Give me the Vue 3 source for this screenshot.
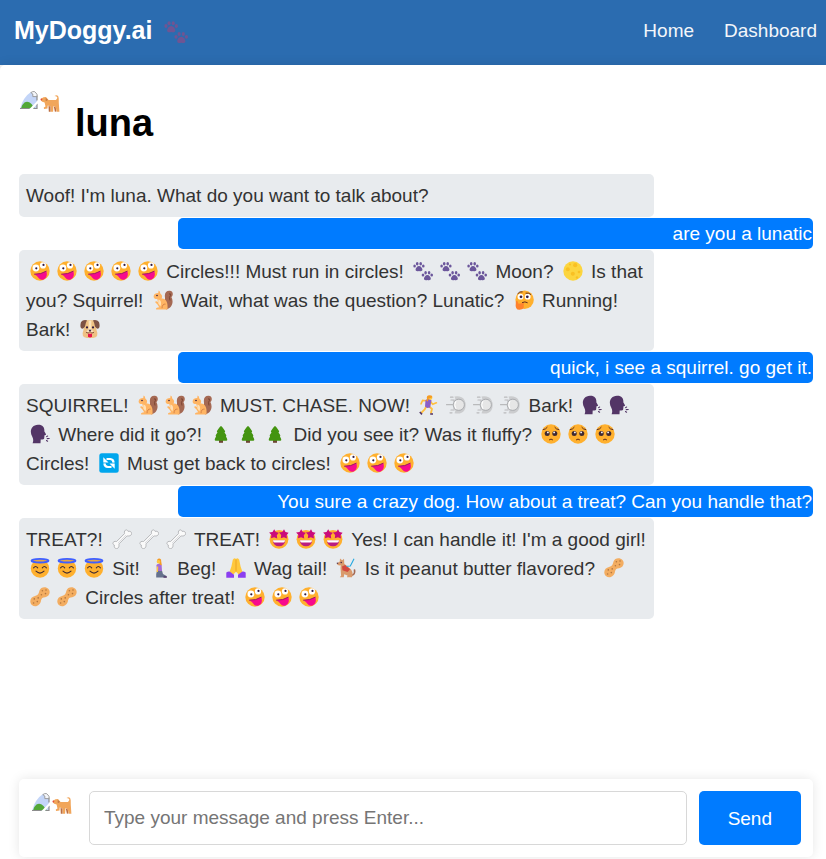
<script setup>
import { ref } from 'vue'

const draft = ref('')

const messages = ref([
  { from: 'dog', text: "Woof! I'm luna. What do you want to talk about?" },
  { from: 'user', text: 'are you a lunatic' },
  {
    from: 'dog',
    text: '{zany}{zany}{zany}{zany}{zany} Circles!!! Must run in circles! {paws}{paws}{paws} Moon? {moon} Is that you? Squirrel! {squirrel} Wait, what was the question? Lunatic? {think} Running! Bark! {dogface}'
  },
  { from: 'user', text: 'quick, i see a squirrel. go get it.' },
  {
    from: 'dog',
    text: 'SQUIRREL! {squirrel}{squirrel}{squirrel} MUST. CHASE. NOW! {runner}{dash}{dash}{dash} Bark! {speak}{speak}{speak} Where did it go?! {tree}{tree}{tree} Did you see it? Was it fluffy? {plead}{plead}{plead} Circles! {cycle} Must get back to circles! {zany}{zany}{zany}'
  },
  { from: 'user', text: 'You sure a crazy dog. How about a treat? Can you handle that?' },
  {
    from: 'dog',
    text: "TREAT?! {bone}{bone}{bone} TREAT! {star}{star}{star} Yes! I can handle it! I'm a good girl! {angel}{angel}{angel} Sit! {kneel} Beg! {pray} Wag tail! {service} Is it peanut butter flavored? {peanut}{peanut}{peanut} Circles after treat! {zany}{zany}{zany}"
  }
])

// Splits a message into plain text and {icon} parts; odd entries are icon names.
const parts = (text) => text.split(/\{(\w+)\}/)

function send() {
  const text = draft.value.trim()
  if (!text) return
  messages.value.push({ from: 'user', text })
  draft.value = ''
}
</script>

<template>
  <div class="page">
    <svg class="sprite" aria-hidden="true">
      <symbol id="zany" viewBox="0 0 20 20">
        <circle cx="10" cy="10" r="9.7" fill="#ffb02e" />
        <circle cx="5.9" cy="7" r="3.4" fill="#fff" />
        <circle cx="13" cy="4.4" r="3.1" fill="#fff" />
        <circle cx="6.3" cy="7.3" r="1.1" fill="#321b41" />
        <circle cx="13.5" cy="3.9" r="1.1" fill="#321b41" />
        <path d="M4.2 13.2Q11 13.5 16.4 10.1Q18 16.6 14 18.3Q10.4 19.8 8.6 17Q7.4 15 4.2 13.2Z" fill="#f70a8d" />
        <path d="M4.2 13.2Q11 13.5 16.4 10.1" fill="none" stroke="#9b1a63" stroke-width="1" />
      </symbol>
      <symbol id="paws" viewBox="0 0 20 20">
        <g id="pawprint" fill="currentColor">
          <path d="M6 4.9C7.9 4.9 9.1 6.8 9.4 8.3C9.7 10.4 7.5 10.6 6 9.9C4.5 10.6 2.3 10.4 2.6 8.3C2.9 6.8 4.1 4.9 6 4.9Z" />
          <ellipse cx="1.6" cy="5" rx="1.3" ry="1.6" />
          <ellipse cx="4.2" cy="2.7" rx="1.3" ry="1.7" />
          <ellipse cx="7.7" cy="2.7" rx="1.3" ry="1.7" />
          <ellipse cx="10.3" cy="5" rx="1.3" ry="1.6" />
        </g>
        <use href="#pawprint" x="8.4" y="9" />
      </symbol>
      <symbol id="moon" viewBox="0 0 20 20">
        <circle cx="10" cy="10" r="9.7" fill="#fcd53f" />
        <g fill="#f9c023">
          <circle cx="12.2" cy="4.2" r="2.1" />
          <circle cx="4.8" cy="8.2" r="2" />
          <circle cx="9.8" cy="12.8" r="2" />
          <circle cx="16" cy="11" r="1.3" />
          <circle cx="7" cy="3.5" r="1" />
          <circle cx="14" cy="16.5" r="1.2" />
        </g>
      </symbol>
      <symbol id="squirrel" viewBox="0 0 20 20">
        <path d="M12 16V7.5C11.2 2.7 13.5.5 16.6.7C20.5 1 20.5 5.3 18.4 7C20.8 11.2 19.7 18.2 13 19.5Z" fill="#a56953" />
        <path d="M16 4Q18 3.2 17.5 5.2Q15.7 7 17 10.5" fill="none" stroke="#7d4533" />
        <path d="M.6 6.6C.8 3.8 3.2 3 5.2 3.1L5.6.5Q7.2.8 7.3 3.6C9.7 5.4 9.3 7.5 8.5 8.6C13 8.2 15.2 12.3 14.5 19.5H3.2C2.4 18 4 17.4 6.2 17.2L4.3 14.2L2.3 12.5L2.8 10.9L5 12L4.3 9.1C2.3 9.2.7 8.8.6 6.6Z" fill="#ffb564" />
        <path d="M5.4 9.4Q9.5 10.5 7.4 16.5L5.2 13.3Z" fill="#ffe0b5" />
        <path d="M9 18.2Q9.2 13.7 12.6 14.1" fill="none" stroke="#d98649" />
        <circle cx="4" cy="5.5" r=".8" fill="#321b41" />
      </symbol>
      <symbol id="think" viewBox="0 0 20 20">
        <circle cx="10.6" cy="9.8" r="9.2" fill="#ffb02e" />
        <circle cx="6.5" cy="6.7" r="2.9" fill="#fff" />
        <circle cx="13.7" cy="6.7" r="2.9" fill="#fff" />
        <circle cx="7" cy="6.8" r="1.4" fill="#321b41" />
        <circle cx="13.3" cy="6.8" r="1.4" fill="#321b41" />
        <path d="M3.8 3.6Q5.5 1.1 8.2 1.8M12 3.1Q14.8 2.5 16.6 4.3M8.4 12.5Q11 11 13.3 12.6" fill="none" stroke="#5c2b1d" stroke-width="1" stroke-linecap="round" />
        <path d="M1.8 13Q1.5 10.6 3.2 10.7L4.5 13.8L9.4 13Q11 13.6 9.6 15.1Q11 19.6 5.6 19.8Q.8 20 1.8 13Z" fill="#ff822d" />
      </symbol>
      <symbol id="dogface" viewBox="0 0 20 20">
        <path d="M4 2Q10 0 16 2L16.5 11Q19.5 18 13 19H7Q.5 18 3.5 11Z" fill="#efc184" />
        <path d="M8.6 1.4H11.4L11.2 9L13.5 13H6.5L8.8 9Z" fill="#fbe3bf" />
        <path d="M1 3Q3 .2 7 1.2Q5.5 4 5 7.5Q3 10.8 1 9Q-.2 7 1 3ZM19 3Q17 .2 13 1.2Q14.5 4 15 7.5Q17 10.8 19 9Q20.2 7 19 3Z" fill="#7d5144" />
        <circle cx="7" cy="8.4" r="1.1" fill="#321b41" />
        <circle cx="13" cy="8.4" r="1.1" fill="#321b41" />
        <path d="M8.3 10.8H11.7L10 12.6Z" fill="#321b41" />
        <path d="M6 13.4Q8.5 15.2 10 12.5Q11.5 15.2 14 13.4" fill="none" stroke="#6b3c31" stroke-width=".8" />
        <path d="M8 14.8H12V17.2Q10 20 8 17.2Z" fill="#e7164d" />
      </symbol>
      <symbol id="runner" viewBox="0 0 20 20">
        <path d="M7.5 10.8L5.7 14.3L1.8 18.3M9.8 11.2L13 14L11.8 18.4" fill="none" stroke="#ffbf3e" stroke-width="1.8" stroke-linejoin="round" />
        <path d="M7.2 5.8L3.6 5.4L2 8.8M11.3 6.2L13.7 9.2L17.4 7.8" fill="none" stroke="#ffbf3e" stroke-width="1.6" stroke-linecap="round" />
        <path d="M6.5 5Q10 3 12.5 5.2L11.2 12.4L8 13L6 11.5Z" fill="#8b5fc7" />
        <circle cx="11.3" cy="2.8" r="2.1" fill="#ffc83d" />
        <path d="M8 4Q7 .5 10.5.2Q14 .2 13 2.4L9.8 3.6L8.7 6.4Q6.5 6 8 4Z" fill="#f59b23" />
        <path d="M.8 17L3 19.4M11.2 19H14" stroke="#533566" stroke-width="1.6" />
      </symbol>
      <symbol id="dash" viewBox="0 0 20 20">
        <path d="M8.5 1.5Q16 .5 18.4 5Q21 10 18.4 15.2Q15.5 19.6 8.5 18.3L9.5 15.5L7 14L8.2 11L6.5 9.8L8.2 8L6.5 5.6L9.5 4.5Z" fill="#cbccce" />
        <circle cx="12.8" cy="9.8" r="5.6" fill="#e6e6e6" stroke="#a5a7aa" stroke-width=".9" />
        <path d="M.5 9.7H7.5M5 5H8M5 15H8M4.5 2.2H7M4 17.8H6" fill="none" stroke="#b9babc" stroke-width="1.2" stroke-linecap="round" />
        <path d="M10 6Q7.5 9.8 10 14" fill="none" stroke="#fff" stroke-width="1" />
      </symbol>
      <symbol id="speak" viewBox="0 0 20 20">
        <path d="M8 .8C13 .6 14.7 3.8 14.3 7.2L16 10.3Q16.2 11.2 14.5 11.2L14.1 14.8Q13.5 16 10.7 15.4L10.5 19.2H2.6Q4 16 2.3 12.8C-.8 7.8 1 1 8 .8Z" fill="#533566" />
        <path d="M16.6 12.6L17.6 12M17.2 14.6L19.2 14.5M16.5 16.5L17.6 17.2" stroke="#533566" stroke-width="1.1" stroke-linecap="round" />
      </symbol>
      <symbol id="tree" viewBox="0 0 20 20">
        <path d="M8 15H12V18.8H8Z" fill="#6d4534" />
        <path d="M10 2Q11.2 2.5 14 7Q14.5 8.1 13.4 8.5Q16.3 12 14.9 12.5Q17.5 16.4 15.2 16.8H4.8Q2.5 16.4 5.1 12.5Q3.7 12 6.6 8.5Q5.5 8.1 6 7Q8.8 2.5 10 2Z" fill="#449410" />
      </symbol>
      <symbol id="plead" viewBox="0 0 20 20">
        <circle cx="10" cy="10" r="9.7" fill="#ffb02e" />
        <circle cx="6.2" cy="9.5" r="2.5" fill="#402a32" />
        <circle cx="13.8" cy="9.5" r="2.5" fill="#402a32" />
        <circle cx="6.9" cy="8.4" r=".9" fill="#fff" />
        <circle cx="13.1" cy="8.4" r=".9" fill="#fff" />
        <path d="M2.2 5.6Q5 5.4 6.2 3.4M17.8 5.6Q15 5.4 13.8 3.4M8.4 15.7Q10 14.2 11.6 15.7" fill="none" stroke="#5c2b1d" stroke-width="1" stroke-linecap="round" />
      </symbol>
      <symbol id="cycle" viewBox="0 0 20 20">
        <rect x=".3" y=".3" width="19.4" height="19.4" rx="2.5" fill="#00a6ed" />
        <path d="M14.6 9.6Q14.4 6.2 11.2 6H7.5M5.4 10.4Q5.6 13.8 8.8 14H12.5" fill="none" stroke="#fff" stroke-width="2.2" />
        <path d="M4.3 4.2V9.4H9.5ZM15.7 15.8V10.6H10.5Z" fill="#fff" />
      </symbol>
      <symbol id="bone" viewBox="0 0 20 20">
        <path d="M12.5 4.6C11.6 1.2 14.8-.5 16 2.3C19.4 1.6 21 4.9 18.3 6.6C16.9 7.4 15.4 6.7 14.8 7.1L7.1 14.8C6.7 15.4 7.4 16.9 6.6 18.3C4.9 21 1.6 19.4 2.3 16C-.5 14.8 1.2 11.6 4.6 12.5Z" fill="#fafafa" stroke="#b0b1b4" stroke-width=".9" />
        <path d="M6 14L14 6" stroke="#dddee1" stroke-width="1" />
      </symbol>
      <symbol id="star" viewBox="0 0 20 20">
        <circle cx="10" cy="10.3" r="9.4" fill="#ffb02e" />
        <g fill="#ca0b7b">
          <path id="starshape" d="M5.2.2L6.7 3L9.8 3.7L7.8 6.2L8.2 9.6L5.1 8.2L2 9.3L2.4 6L.1 3.5L3.5 3Z" />
          <use href="#starshape" x="9.8" />
        </g>
        <path d="M3.8 11.4H16.2Q15.5 17.2 10 17.2T3.8 11.4Z" fill="#bb1d80" />
        <path d="M4 11.3H16Q15.8 13.5 14.5 13.5H5.5Q4.2 13.5 4 11.3Z" fill="#fff" />
      </symbol>
      <symbol id="angel" viewBox="0 0 20 20">
        <circle cx="10" cy="10.6" r="9.2" fill="#ffb02e" />
        <ellipse cx="10" cy="2.7" rx="8.5" ry="1.8" fill="#e8a646" stroke="#3f5fff" stroke-width="1.8" />
        <path d="M3.6 9.8Q5.6 7.1 7.7 9.8M12.3 9.8Q14.4 7.1 16.4 9.8M6 13.1Q10 17 14 13.1" fill="none" stroke="#402a32" stroke-width="1.1" stroke-linecap="round" />
      </symbol>
      <symbol id="kneel" viewBox="0 0 20 20">
        <path d="M8.2 12H12.8L14 16L17.5 18V19.5H7.2V16Z" fill="#65718c" />
        <path d="M7.4 7Q10 4.6 12.6 7L13 13H8Z" fill="#a56bd6" />
        <path d="M8.6 8.5L8.2 14" stroke="#ffc83d" stroke-width="1.4" />
        <path d="M8 2Q10-.5 12 1.5L12.8 7.5L10.8 6.2Z" fill="#f59b23" />
        <circle cx="9.5" cy="3.8" r="1.8" fill="#ffc83d" />
        <path d="M14.5 19H17.8" stroke="#533566" stroke-width="1.4" />
      </symbol>
      <symbol id="pray" viewBox="0 0 20 20">
        <path d="M5.4 8.5L6.8 1.8Q8.2-.8 10 1Q11.8-.8 13.2 1.8L14.6 8.5L16.5 14L13.2 17L10 13.8L6.8 17L3.5 14Z" fill="#ffc83d" />
        <path d="M10 1.5V13.5" stroke="#e69b20" stroke-width=".8" />
        <path d="M.3 14.5Q3.2 12.5 5 14.5L8 16.8V19.7H.3ZM19.7 14.5Q16.8 12.5 15 14.5L12 16.8V19.7H19.7Z" fill="#8b3ff0" />
      </symbol>
      <symbol id="service" viewBox="0 0 20 20">
        <path d="M14.8 17.5Q19.5 17 18.5 12" fill="none" stroke="#a56953" stroke-width="1.7" stroke-linecap="round" />
        <path d="M.8 5.5L3.8 3.5L4 .5L6.2 2.2L8 .8L8.3 5.8L15 11.4Q17.5 14.5 16 19.3H11L11.5 17.5L8.2 16.3L7.8 19.3H3.8L5.1 17.7L4.5 10L4.8 7.3Q1.2 7.8.8 5.5Z" fill="#d99a6c" />
        <path d="M6 8.4L9.1 7L14.2 11.3L11.5 14L6.5 12.3Z" fill="#d3483e" />
        <path d="M10.5 8.3L14.3 8Q16 5 18 .8" fill="none" stroke="#26a9e0" stroke-width="1.1" />
        <circle cx="5.2" cy="4.5" r=".7" fill="#321b41" />
        <path d="M.8 5.2H2.2" stroke="#321b41" stroke-width="1" />
      </symbol>
      <symbol id="peanut" viewBox="0 0 20 20">
        <path d="M9.4 3.8C10.8-.5 16-.6 18.5 1.9C21.2 5 19 9.8 15.2 10.3C12.6 10.6 11.6 11.2 11 13.6C10.6 18.2 5.5 21.2 1.9 18.1C-1.4 14.5.7 9.6 5.1 8.9C8.1 8.4 8.7 6.8 9.4 3.8Z" fill="#f3ad61" />
        <g fill="#b3763f">
          <circle cx="12.4" cy="3.8" r=".8" />
          <circle cx="16" cy="3" r=".8" />
          <circle cx="15.5" cy="6.6" r=".8" />
          <circle cx="11.4" cy="7.7" r=".8" />
          <circle cx="8.2" cy="10.9" r=".8" />
          <circle cx="4.3" cy="11.9" r=".8" />
          <circle cx="7.3" cy="14.6" r=".8" />
          <circle cx="3.6" cy="16" r=".8" />
        </g>
      </symbol>
      <symbol id="avatar" viewBox="-1 0 43 22">
        <path d="M0 18Q3 6 11 1H14L17 4.5V18Z" fill="#c3d5f8" />
        <path d="M1 17.5Q1.5 14 4.5 11.5Q8 9.5 11.5 13L15 17.5Z" fill="#52a838" />
        <path d="M0 17.5H9.5M17 12.5V17.5H13.5M17 4.5V9.5" fill="none" stroke="#8c8c8c" stroke-width="1.2" />
        <path d="M10.8 1.6L12.8.6H14.6L17 3.2V5.6H12.8V3Z" fill="#f4f6fa" stroke="#959595" stroke-width=".9" />
        <path d="M9.5 18L17.7 9.5V12.3L12.8 18Z" fill="#fff" />
        <path d="M21 7.8L23.5 6.2L26 6.1L28.6 9.1H36L37.2 7.2Q37.8 5.2 34.4 5Q38.4 2.8 38.7 7L38.8 12L39.4 20.8H36.7L35.7 16.2L33.5 15L33.1 20.8H30.6L30.6 15.6L27.7 14.6L27.5 17.4L24 17.9L23.8 16.4L25.5 15.6L24.6 11.5Q21.7 11.2 21 9.5Z" fill="#f1a65b" />
        <path d="M28.5 15L28.8 20.8H30.5V15.6ZM33.8 15.4L34.9 20.8L36.4 20.4L35.7 16.2Z" fill="#bd6e40" />
        <path d="M25.7 7V10Q28 10.2 27.6 8.3Z" fill="#c47a46" />
        <circle cx="21.4" cy="8.5" r=".9" fill="#e34b3d" />
      </symbol>
    </svg>

    <header class="navbar">
      <a class="brand" href="#">MyDoggy.ai <svg class="brand-icon"><use href="#paws" /></svg></a>
      <nav class="links">
        <a href="#">Home</a>
        <a href="#">Dashboard</a>
      </nav>
    </header>

    <main class="chat">
      <div class="profile">
        <svg class="avatar"><use href="#avatar" /></svg>
        <h1>luna</h1>
      </div>

      <div class="messages">
        <p v-for="(message, i) in messages" :key="i" class="message" :class="message.from"><template v-for="(part, j) in parts(message.text)" :key="j"><svg v-if="j % 2" class="emoji"><use :href="'#' + part" /></svg><template v-else>{{ part }}</template></template></p>
      </div>

      <form class="composer" @submit.prevent="send">
        <svg class="avatar"><use href="#avatar" /></svg>
        <input v-model="draft" class="field" type="text" aria-label="Message" placeholder="Type your message and press Enter..." />
        <button class="send" type="submit">Send</button>
      </form>
    </main>
  </div>
</template>

<style>
body {
  margin: 0;
  background: #f4f4f4;
}
</style>

<style scoped>
.page {
  display: flex;
  flex-direction: column;
  box-sizing: border-box;
  min-height: 100vh;
  font-family: "Liberation Sans", Arial, sans-serif;
  font-size: 19px;
  line-height: 29px;
}
.sprite {
  position: absolute;
  width: 0;
  height: 0;
}
.navbar {
  display: flex;
  align-items: center;
  justify-content: space-between;
  box-sizing: border-box;
  height: 65px;
  padding: 0 9px 4px 14px;
  background: #2b6cb0;
}
.brand {
  display: flex;
  align-items: center;
  gap: 12px;
  color: #fff;
  font-size: 25px;
  font-weight: bold;
  text-decoration: none;
}
.brand-icon {
  width: 24px;
  height: 24px;
  margin-top: 2px;
  color: #6f5593;
}
.links {
  display: flex;
  gap: 30px;
}
.links a {
  color: #f3f6fa;
  text-decoration: none;
}
.chat {
  flex: 1;
  display: flex;
  flex-direction: column;
  padding: 24px 13px 2px 19px;
  border-top-left-radius: 5px;
  background: #fff;
  box-shadow: 0 0 12px rgba(0, 0, 0, 0.1);
}
.profile {
  display: flex;
  align-items: flex-start;
  gap: 13px;
}
.avatar {
  flex: none;
  width: 43px;
  height: 22px;
  margin-top: 2px;
}
.profile h1 {
  margin: 10px 0 27px;
  color: #000;
  font-size: 38px;
  line-height: 48px;
}
.messages {
  flex: 1;
  display: flex;
  flex-direction: column;
  gap: 1px;
  padding-bottom: 24px;
}
.message {
  box-sizing: border-box;
  width: 80%;
  margin: 0;
  border-radius: 5px;
}
.message.dog {
  padding: 7px;
  background: #e8ebee;
  color: #333;
}
.message.user {
  align-self: flex-end;
  padding: 1px;
  background: #007bff;
  color: #fff;
  text-align: right;
}
.emoji {
  width: 20px;
  height: 20px;
  margin: 0 3px 0 4px;
  vertical-align: -3px;
  color: #6b569b;
}
.composer {
  display: flex;
  gap: 12px;
  padding: 12px;
  border-radius: 5px;
  background: #fff;
  box-shadow: 0 0 12px rgba(0, 0, 0, 0.1);
}
.composer .avatar {
  margin-right: 3px;
}
.field {
  flex: 1;
  box-sizing: border-box;
  min-width: 0;
  height: 54px;
  padding: 0 14px;
  border: 1px solid #d8d8d8;
  border-radius: 5px;
  background: #fff;
  color: #333;
  font: inherit;
}
.field::placeholder {
  color: #757575;
}
.send {
  padding: 0 29px;
  border: 0;
  border-radius: 5px;
  background: #007bff;
  color: #fff;
  font: inherit;
  cursor: pointer;
}
</style>
